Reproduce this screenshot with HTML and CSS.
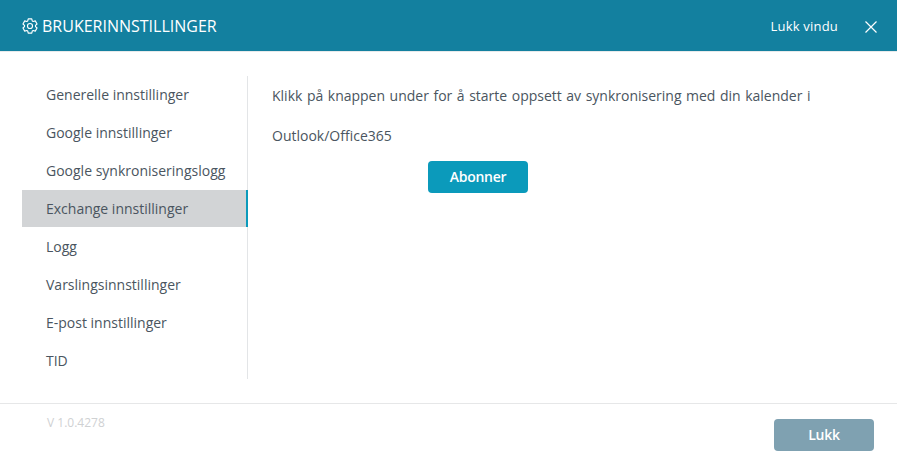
FILE: index.html
```html
<!DOCTYPE html>
<html lang="no">
<head>
<meta charset="utf-8">
<title>Brukerinnstillinger</title>
<link rel="stylesheet" href="styles.css">
</head>
<body>
<div class="dialog">
  <header class="header">
    <div class="title">
      <svg class="gear" viewBox="0 0 24 24" width="16" height="16" fill="none" stroke="#fff" stroke-width="1.7" stroke-linejoin="round">
        <circle cx="12" cy="12" r="3.8"/>
        <path d="M9.34 1.33L14.66 1.33L15.38 4.42L16.88 5.29L19.91 4.36L22.57 8.97L20.25 11.13L20.25 12.87L22.57 15.03L19.91 19.64L16.88 18.71L15.38 19.58L14.66 22.67L9.34 22.67L8.62 19.58L7.12 18.71L4.09 19.64L1.43 15.03L3.75 12.87L3.75 11.13L1.43 8.97L4.09 4.36L7.12 5.29L8.62 4.42Z"/>
      </svg>
      <span>BRUKERINNSTILLINGER</span>
    </div>
    <div class="close-area">
      <span class="close-label">Lukk vindu</span>
      <svg class="close-x" viewBox="0 0 12 12" width="12" height="12" stroke="#fff" stroke-width="1.2"><path d="M.5.5l11 11M11.500.5l-11 11"/></svg>
    </div>
  </header>
  <main class="body">
    <nav class="menu">
      <a class="item">Generelle innstillinger</a>
      <a class="item">Google innstillinger</a>
      <a class="item">Google synkroniseringslogg</a>
      <a class="item active">Exchange innstillinger</a>
      <a class="item">Logg</a>
      <a class="item">Varslingsinnstillinger</a>
      <a class="item">E-post innstillinger</a>
      <a class="item">TID</a>
    </nav>
    <section class="content">
      <p class="text wide">Klikk på knappen under for å starte oppsett av synkronisering med din kalender i</p>
      <p class="text">Outlook/Office365</p>
      <button class="btn subscribe">Abonner</button>
    </section>
  </main>
  <footer class="footer">
    <span class="version">V 1.0.4278</span>
    <button class="btn close">Lukk</button>
  </footer>
</div>
</body>
</html>
```
FILE: styles.css
```css
* { box-sizing: border-box; }
html, body { margin: 0; padding: 0; background: #fff; }
body { font-family: "Open Sans", sans-serif; color: #4a5560; width: 897px; height: 459px; overflow: hidden; }
.dialog { display: flex; flex-direction: column; height: 459px; }
.header { height: 52px; flex: none; background: #13809f; border-bottom: 1px solid #e8eaeb; color: #fff; display: flex; align-items: center; justify-content: space-between; padding: 0 20px 0 22px; }
.title { display: flex; align-items: center; gap: 4px; font-size: 16px; }
.gear { display: block; }
.close-area { display: flex; align-items: center; gap: 27px; }
.close-label { font-size: 13px; letter-spacing: .2px; }
.close-x { display: block; margin-top: 2px; }
.body { flex: none; display: flex; height: 351px; padding: 24px 0 0 22px; }
.menu { width: 226px; height: 303px; flex: none; border-right: 1px solid #e3e5e7; display: flex; flex-direction: column; }
.item { height: 38px; flex: none; font-size: 14px; line-height: 37px; padding-left: 24px; color: #4a5560; }
.item.active { background: #d2d4d6; border-right: 2px solid #0b9abb; margin-right: -1px; height: 37px; margin-bottom: 1px; }
.content { padding: 0 0 0 24px; flex: 1; display: flex; flex-direction: column; align-items: flex-start; }
.text { margin: 0; font-size: 14px; height: 41px; line-height: 38px; }
.wide { word-spacing: .9px; line-height: 40px; }
.btn { border: 0; border-radius: 4px; width: 100px; height: 32px; color: #fff; font-family: "Open Sans", sans-serif; font-size: 14px; font-weight: 600; letter-spacing: -.25px; padding: 0 0 2px; }
.subscribe { background: #0b9abb; margin: 3px 0 0 156px; }
.footer { flex: 1; border-top: 1px solid #e6e7e8; display: flex; justify-content: space-between; align-items: flex-start; padding: 11px 23px 0 47px; }
.version { font-size: 12px; color: #cfd1d3; font-weight: 500; line-height: 16px; }
.close { background: #7fa1b1; margin-top: 4px; }
```
